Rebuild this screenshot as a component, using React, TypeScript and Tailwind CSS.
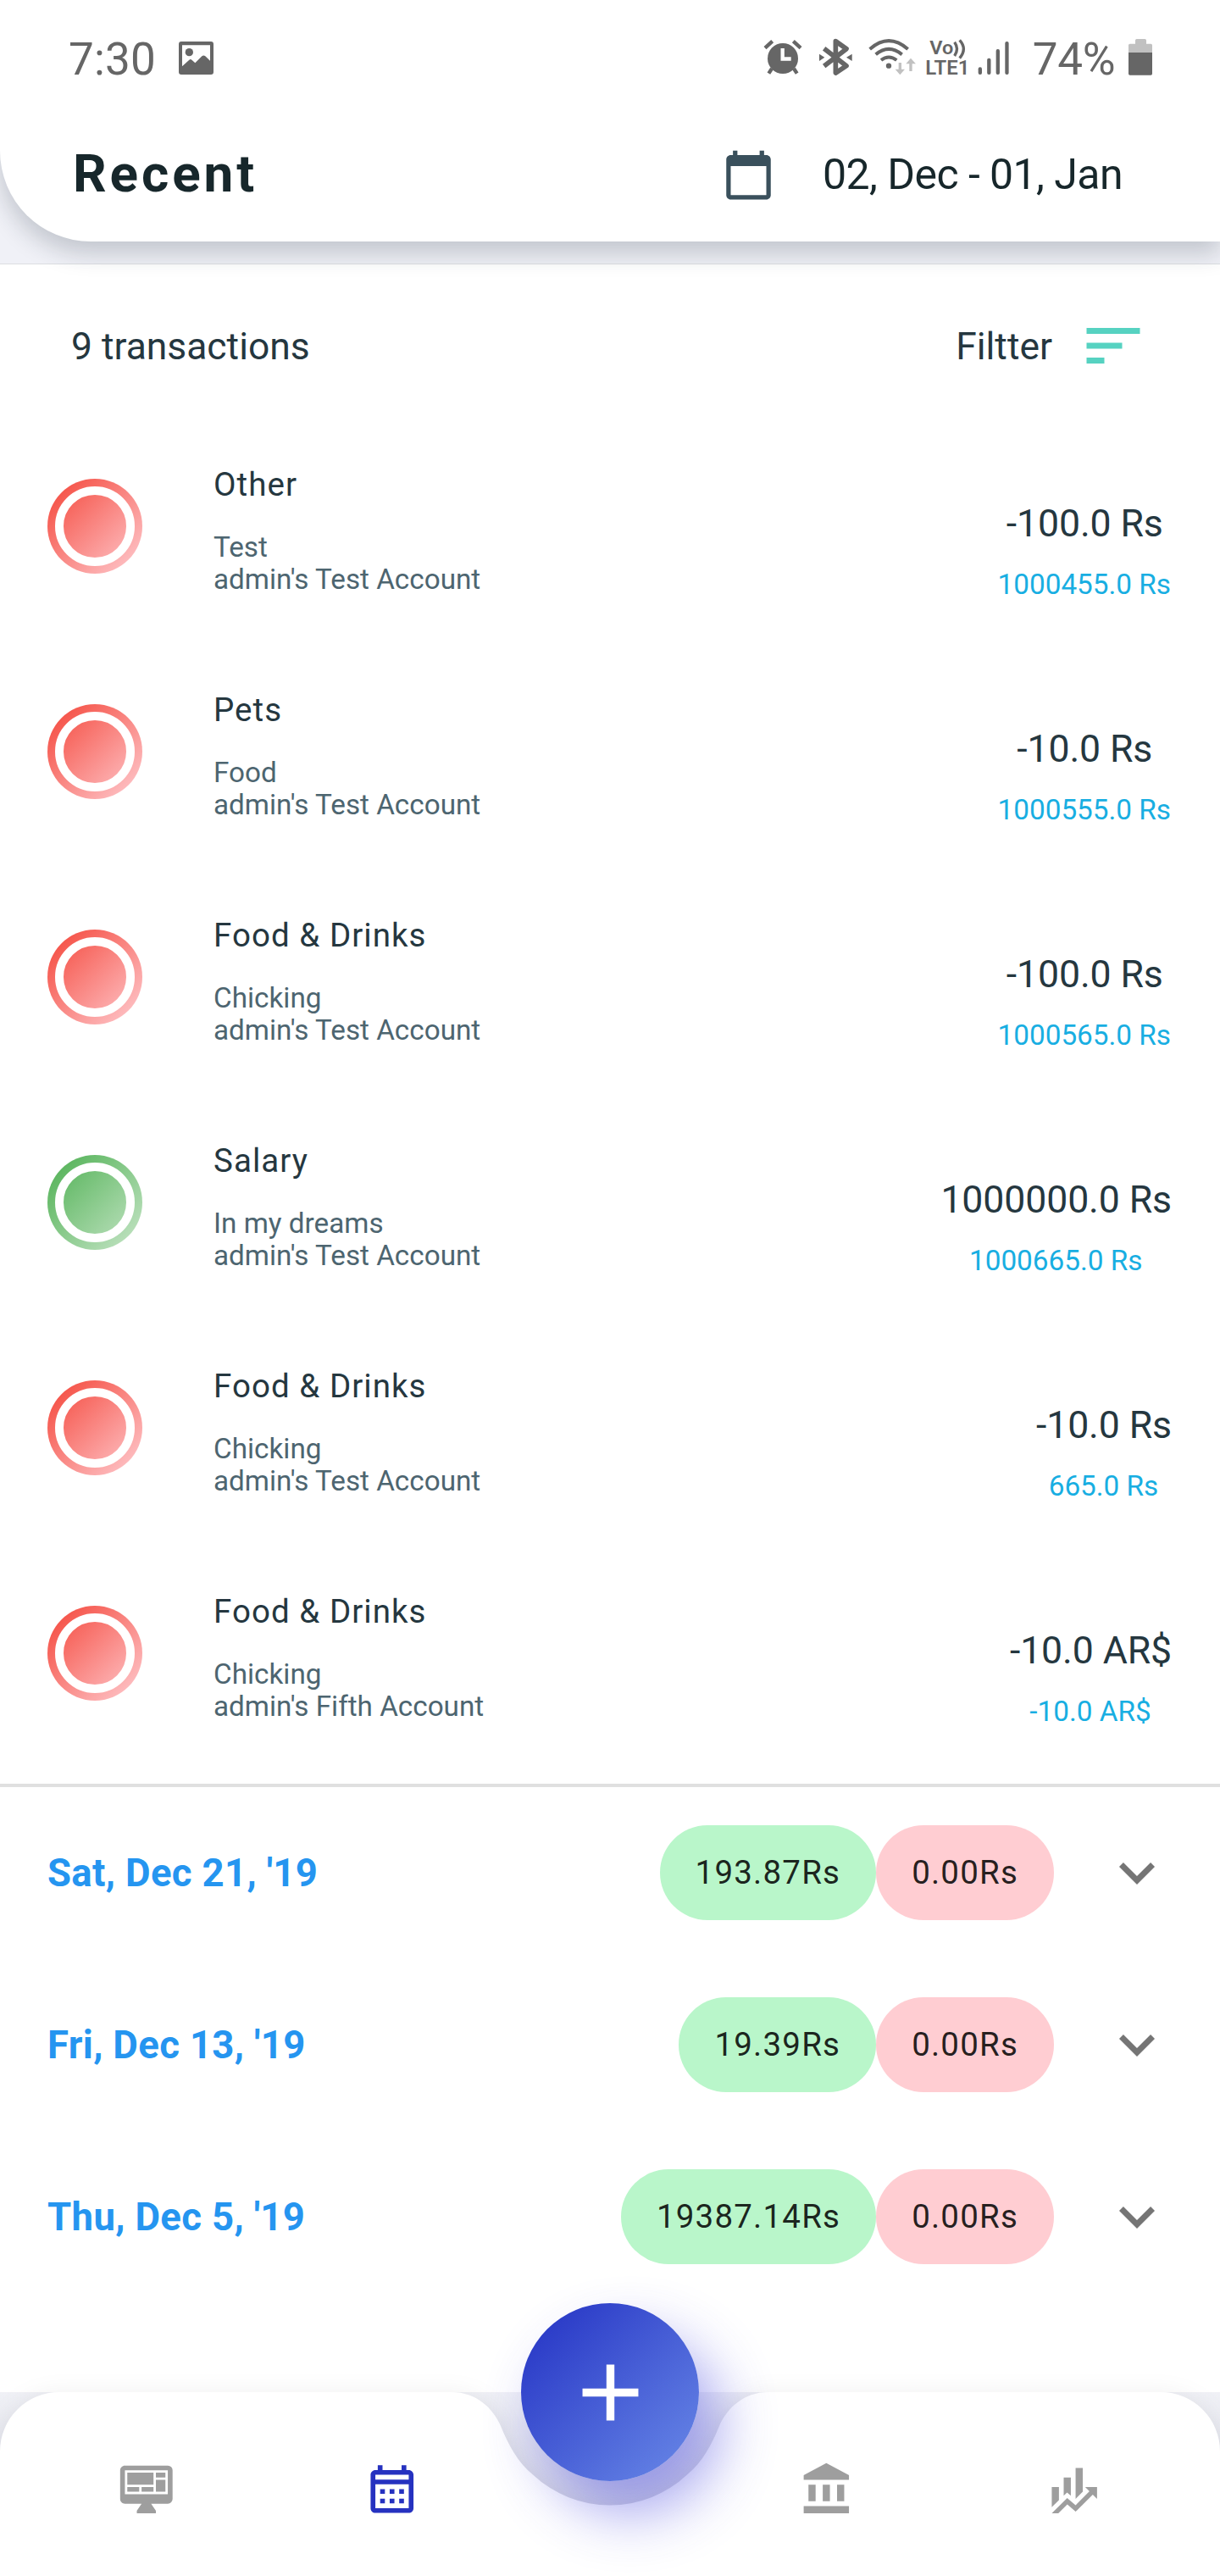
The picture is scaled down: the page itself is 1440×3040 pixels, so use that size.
import React from 'react';
import { MdAdd, MdCalendarToday, MdExpandMore, MdSort } from 'react-icons/md';

type Transaction = {
  title: string;
  note: string;
  account: string;
  amount: string;
  balance: string;
  kind: 'expense' | 'income';
};

const transactions: Transaction[] = [
  { title: 'Other', note: 'Test', account: "admin's Test Account", amount: '-100.0 Rs', balance: '1000455.0 Rs', kind: 'expense' },
  { title: 'Pets', note: 'Food', account: "admin's Test Account", amount: '-10.0 Rs', balance: '1000555.0 Rs', kind: 'expense' },
  { title: 'Food & Drinks', note: 'Chicking', account: "admin's Test Account", amount: '-100.0 Rs', balance: '1000565.0 Rs', kind: 'expense' },
  { title: 'Salary', note: 'In my dreams', account: "admin's Test Account", amount: '1000000.0 Rs', balance: '1000665.0 Rs', kind: 'income' },
  { title: 'Food & Drinks', note: 'Chicking', account: "admin's Test Account", amount: '-10.0 Rs', balance: '665.0 Rs', kind: 'expense' },
  { title: 'Food & Drinks', note: 'Chicking', account: "admin's Fifth Account", amount: '-10.0 AR$', balance: '-10.0 AR$', kind: 'expense' },
];

const days = [
  { date: "Sat, Dec 21, '19", income: '193.87Rs', expense: '0.00Rs' },
  { date: "Fri, Dec 13, '19", income: '19.39Rs', expense: '0.00Rs' },
  { date: "Thu, Dec 5, '19", income: '19387.14Rs', expense: '0.00Rs' },
];

const DARK = '#666666';
const LIGHT = '#c1c1c1';

function StatusBar() {
  return (
    <div className="flex h-[140px] items-center pl-[81px] pr-20 text-[53px] leading-none text-[#666666]">
      <span className="tracking-[0.2px]">7:30</span>
      <svg className="ml-[26.5px] h-[39px] w-[41px] -translate-y-[2px]" viewBox="0 0 123 117">
        <path
          fill={DARK}
          fillRule="evenodd"
          d="M9 0H114Q123 0 123 9V108Q123 117 114 117H9Q0 117 0 108V9Q0 0 9 0ZM12 13V88L37 65Q42 61 47 66L58 76L82 52Q88 47 94 52L111 68V13Z"
        />
        <circle cx="37" cy="38" r="14" fill={DARK} />
      </svg>
      <div className="ml-auto flex items-center">
        <svg className="h-[51.7px] w-[46.7px]" viewBox="30 27 140 155">
          <circle cx="99" cy="102" r="54" fill={DARK} />
          <g stroke={DARK} strokeWidth="13" fill="none">
            <path d="M36 65L62 41M136 41L162 65M60 138L49 155M138 138L149 155" />
          </g>
          <path d="M98 66V103.500H128" stroke="#fff" strokeWidth="13" fill="none" />
        </svg>
        <svg className="ml-[18.700px] h-[51.7px] w-[40.7px]" viewBox="226 27 122 155">
          <path d="M246 67L325 128L287 153V41L325 68L246 129" stroke={DARK} strokeWidth="17" strokeLinejoin="round" fill="none" />
          <path d="M229 86L248 98L229 111ZM345 86L325 98L345 111Z" fill={DARK} />
        </svg>
        <svg className="ml-[17.300px] h-[51.7px] w-[58.3px]" viewBox="400 27 175 155">
          <path d="M408 69Q475 10 543 69M429 88Q475 49 522 88M448 108Q475 87 503 108" stroke={DARK} strokeWidth="12" fill="none" />
          <circle cx="475" cy="128" r="9.500" fill={DARK} />
          <path d="M510 117H520V140H532L515 160L498 140H510ZM548 147H558V121H571L553 101L536 121H548Z" fill={LIGHT} />
        </svg>
        <svg className="ml-[9.300px] h-[51.7px] w-[52px]" viewBox="603 27 156 155">
          <g fill={DARK} fontFamily="Roboto" fontWeight="600">
            <text x="619" y="87" fontSize="68" textLength="84" lengthAdjust="spacingAndGlyphs">Vo</text>
            <text x="604" y="158" fontSize="70" textLength="156" lengthAdjust="spacingAndGlyphs">LTE1</text>
          </g>
          <path d="M707 44Q724 68 707 93M725 37Q753 68 725 101" stroke={DARK} strokeWidth="10" fill="none" />
        </svg>
        <svg className="ml-[10.300px] h-[51.7px] w-[37.300px]" viewBox="790 27 112 155">
          <g fill={DARK}>
            <rect x="792" y="133" width="13" height="26" rx="6" />
            <rect x="823.500" y="101" width="13" height="58" rx="6" />
            <rect x="855" y="69" width="13" height="90" rx="6" />
            <rect x="887" y="42" width="13" height="117" rx="6" />
          </g>
        </svg>
        <span className="ml-[27.300px] tracking-[-0.3px]">74%</span>
        <svg className="ml-[15.700px] h-[51.7px] w-[28px]" viewBox="1326 27 84 155">
          <path d="M1350 50V38Q1350 33 1355 33H1384Q1389 33 1389 38V50H1405Q1410 50 1410 55V81H1326V55Q1326 50 1331 50Z" fill={LIGHT} />
          <path d="M1326 81H1410V156Q1410 161 1405 161H1331Q1326 161 1326 156Z" fill={DARK} />
        </svg>
      </div>
    </div>
  );
}

function Header() {
  return (
    <header className="relative z-10 h-[285.4px] rounded-bl-[107px] bg-white shadow-[0_14px_28px_rgba(30,45,60,0.22)]">
      <StatusBar />
      <div className="flex h-[130px] items-center pl-[86px] pr-[115px] text-[#17272b]">
        <h1 className="text-[62px] leading-none font-bold tracking-[3.9px]">Recent</h1>
        <MdCalendarToday className="ml-auto size-[63px] translate-y-[1px] text-[#3a505c]" />
        <span className="ml-[56px] translate-y-[1px] text-[50px] leading-none tracking-[-0.55px]">02, Dec - 01, Jan</span>
      </div>
    </header>
  );
}

function KindBadge({ kind }: { kind: Transaction['kind'] }) {
  const tone =
    kind === 'income'
      ? 'bg-[linear-gradient(135deg,#4caf50,#c8e6c9)]'
      : 'bg-[linear-gradient(135deg,#f44336,#ffcdd2)]';
  return (
    <div className={`flex size-[112px] shrink-0 items-center justify-center rounded-full ${tone}`}>
      <div className="size-[93.4px] rounded-full border-[10px] border-white" />
    </div>
  );
}

function TransactionRow({ item }: { item: Transaction }) {
  return (
    <li className="flex h-[266px] items-center px-14">
      <KindBadge kind={item.kind} />
      <div className="ml-21 self-start pt-[61px]">
        <p className="text-[38.5px] leading-[45px] tracking-[1.05px] text-[#25373f]">{item.title}</p>
        <p className="mt-[33px] text-[33.25px] leading-[38.4px] text-[#4d6570]">
          {item.note}
          <br />
          {item.account}
        </p>
      </div>
      <div className="ml-auto flex flex-col items-center self-start pt-[104px] pr-px">
        <p className="text-[44.6px] leading-[52px] tracking-[-0.1px] text-[#25373f]">{item.amount}</p>
        <p className="mt-[26px] pr-px text-[33.3px] leading-[39px] text-[#18aee2]">{item.balance}</p>
      </div>
    </li>
  );
}

function DayRow({ date, income, expense }: { date: string; income: string; expense: string }) {
  return (
    <li className="flex h-[203px] items-center px-14">
      <span className="text-[45.5px] leading-none font-bold tracking-[0.35px] text-[#2595f0]">{date}</span>
      <div className="ml-auto flex h-28 text-[38.5px] leading-none tracking-[1.2px] text-black/87">
        <span className="flex items-center rounded-full bg-[#b9f6ca] px-[42px]">{income}</span>
        <span className="flex items-center rounded-full bg-[#ffcdd2] px-[42px]">{expense}</span>
      </div>
      <MdExpandMore className="ml-14 size-21 text-[#757575]" />
    </li>
  );
}

function NavIcon({ d, className }: { d: string; className: string }) {
  return (
    <svg className={`size-[67.5px] shrink-0 ${className}`} viewBox="0 0 24 24" fill="currentColor">
      <path d={d} />
    </svg>
  );
}

function BottomNav() {
  return (
    <footer className="relative h-[217px] bg-[linear-gradient(to_bottom,#f0f1f6,#dddee8_133px)] text-[#9e9e9e]">
      <svg
        className="absolute inset-0 h-[217px] w-[1440px] overflow-visible drop-shadow-[0_4px_14px_rgba(0,0,0,0.08)]"
        viewBox="0 0 1440 217"
      >
        <path
          fill="#fff"
          d="M0 70A70 70 0 0 1 70 0H533C562 0 582 19 591 40C600 62 611 83 629 97.500A133 133 0 0 0 811 97.500C829 83 840 62 849 40C858 19 878 0 907 0H1370A70 70 0 0 1 1440 70V217H0Z"
        />
      </svg>
      <nav className="relative flex pt-[81px] pl-[139px]">
        <NavIcon
          className=""
          d="M21,14V4H3V14H21M21,2A2,2 0 0,1 23,4V16A2,2 0 0,1 21,18H14L16,21V22H8V21L10,18H3C1.89,18 1,17.1 1,16V4C1,2.89 1.89,2 3,2H21M4,5H15V10H4V5M16,5H20V7H16V5M20,8V13H16V8H20M4,11H9V13H4V11M10,11H15V13H10V11Z"
        />
        <NavIcon
          className="ml-[222.5px] translate-y-[2.5px] text-[#2632c0]"
          d="M7 11H9V13H7V11M21 5V19C21 20.11 20.11 21 19 21H5C3.89 21 3 20.1 3 19V5C3 3.9 3.9 3 5 3H6V1H8V3H16V1H18V3H19C20.11 3 21 3.9 21 5M5 19H19V9H5V19M5 5V7H19V5H5M15 13V11H17V13H15M11 13V11H13V13H11M7 15H9V17H7V15M15 17V15H17V17H15M11 17V15H13V17H11Z"
        />
        <NavIcon
          className="ml-[446.5px]"
          d="M11.5,1L2,6V8H21V6M16,10V17H19V10M2,22H21V19H2M10,10V17H13V10M4,10V17H7V10H4Z"
        />
        <NavIcon
          className="ml-[222px]"
          d="M6,16.5L3,19.44V11H6M11,14.66L9.43,13.32L8,14.64V7H11M16,13L13,16V3H16M18.81,12.81L17,11H22V16L20.21,14.21L13,21.36L9.53,18.34L5.75,22H3L9.47,15.66L13,18.64"
        />
      </nav>
      <button
        aria-label="Add transaction"
        className="absolute -top-[105px] left-1/2 flex size-[210px] -translate-x-1/2 items-center justify-center rounded-full bg-[linear-gradient(135deg,#2230c3,#6a8ae8)] text-white shadow-[24px_38px_66px_rgba(60,60,220,0.46)]"
      >
        <MdAdd className="size-[113px]" />
      </button>
    </footer>
  );
}

export default function App() {
  return (
    <div className="flex h-[3040px] w-[1440px] flex-col overflow-hidden bg-[#f0f1f7] font-[Roboto,sans-serif]">
      <Header />
      <main className="mt-[25.6px] flex-1 border-t border-[#dcdee2] bg-white">
        <div className="flex h-44 items-center px-[84px] pt-4 text-[#25373f]">
          <h2 className="translate-y-px text-[44.4px] leading-none">9 transactions</h2>
          <span className="ml-auto translate-y-px text-[44.4px] leading-none">Filtter</span>
          <MdSort className="ml-[30px] size-21 text-[#56d2c1]" />
        </div>
        <ul className="border-b-4 border-[#e0e0e0] pb-[21px]">
          {transactions.map((item, i) => (
            <TransactionRow key={i} item={item} />
          ))}
        </ul>
        <ul>
          {days.map((day) => (
            <DayRow key={day.date} {...day} />
          ))}
        </ul>
      </main>
      <BottomNav />
    </div>
  );
}
